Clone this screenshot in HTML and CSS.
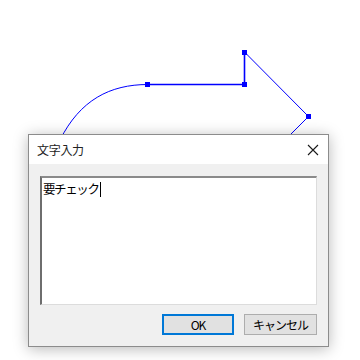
FILE: index.html
```html
<!DOCTYPE html>
<html lang="ja">

<head>
    <meta charset="UTF-8">
    <title>文字入力</title>
    <link rel="stylesheet" href="styles.css">
</head>

<body>

    <!-- Drawing canvas -->
    <svg class="canvas" width="360" height="360" viewBox="0 0 360 360">
        <path d="M148 84.5 C 110 84.5 80 100 60 140" fill="none" stroke="#0000ff" stroke-width="1" />
        <line x1="148" y1="84.5" x2="244.5" y2="84.5" stroke="#0000ff" stroke-width="1.6" />
        <line x1="244.5" y1="52" x2="244.5" y2="84.5" stroke="#0000ff" stroke-width="1.6" />
        <line x1="244.5" y1="52" x2="308.5" y2="116.5" stroke="#0000ff" stroke-width="1" />
        <line x1="308.5" y1="116.5" x2="284" y2="141" stroke="#0000ff" stroke-width="1" />
        <rect x="145" y="82" width="5" height="5" fill="#0000ff" />
        <rect x="242" y="82" width="5" height="5" fill="#0000ff" />
        <rect x="242" y="50" width="5" height="5" fill="#0000ff" />
        <rect x="306" y="114" width="5" height="5" fill="#0000ff" />
    </svg>

    <!-- Input dialog -->
    <div class="dialog">
        <div class="title-bar">
            <span class="title">文字入力</span>
            <svg class="close" width="12" height="12" viewBox="0 0 12 12">
                <path d="M1 1 L11 11 M11 1 L1 11" stroke="#1a1a1a" stroke-width="1.1" fill="none" />
            </svg>
        </div>
        <div class="dialog-body">
            <div class="text-box">要チェック<span class="caret"></span></div>
            <div class="buttons">
                <button class="btn btn-default">OK</button>
                <button class="btn">キャンセル</button>
            </div>
        </div>
    </div>

</body>

</html>
```

FILE: styles.css
```css
* {
    margin: 0;
    padding: 0;
    box-sizing: border-box;
}

body {
    width: 360px;
    height: 360px;
    background-color: #fff;
    font-family: "Noto Sans CJK JP", "Noto Sans", sans-serif;
    position: relative;
    overflow: hidden;
    padding: 134px 0 0 28px;
}

/* Canvas */
.canvas {
    position: absolute;
    left: 0;
    top: 0;
}

/* Dialog */
.dialog {
    position: relative;
    width: 301px;
    height: 213px;
    border: 1px solid #8c8c8c;
    background-color: #f0f0f0;
    box-shadow: 0 2px 14px rgba(0, 0, 0, 0.28);
    display: flex;
    flex-direction: column;
}

.title-bar {
    height: 29px;
    background-color: #fff;
    display: flex;
    align-items: center;
    justify-content: space-between;
    padding: 0 9px 0 8px;
}

.title {
    font-size: 12px;
    color: #222;
    letter-spacing: -0.3px;
}

.dialog-body {
    flex: 1;
    padding: 12px 10px 0 11px;
}

.text-box {
    width: 277px;
    height: 129px;
    background-color: #fff;
    border-top: 2px solid #8a8a8a;
    border-left: 2px solid #6e6e6e;
    border-right: 1px solid #dcdcdc;
    border-bottom: 1px solid #dcdcdc;
    padding: 2px 0 0 1px;
    font-size: 12.5px;
    line-height: 17px;
    letter-spacing: -1.4px;
    color: #000;
}

.caret {
    display: inline-block;
    width: 1px;
    height: 15px;
    background-color: #000;
    vertical-align: -3px;
    margin-left: 1px;
}

.buttons {
    display: flex;
    justify-content: flex-end;
    gap: 10px;
    margin-top: 9px;
    padding-right: 1px;
}

.btn {
    width: 73px;
    height: 21px;
    background-color: #e1e1e1;
    border: 1px solid #adadad;
    font-family: "Noto Sans CJK JP", "Noto Sans", sans-serif;
    font-size: 12px;
    letter-spacing: -1px;
    color: #000;
}

.btn-default {
    width: 72px;
    border: 2px solid #0078d7;
}
```
